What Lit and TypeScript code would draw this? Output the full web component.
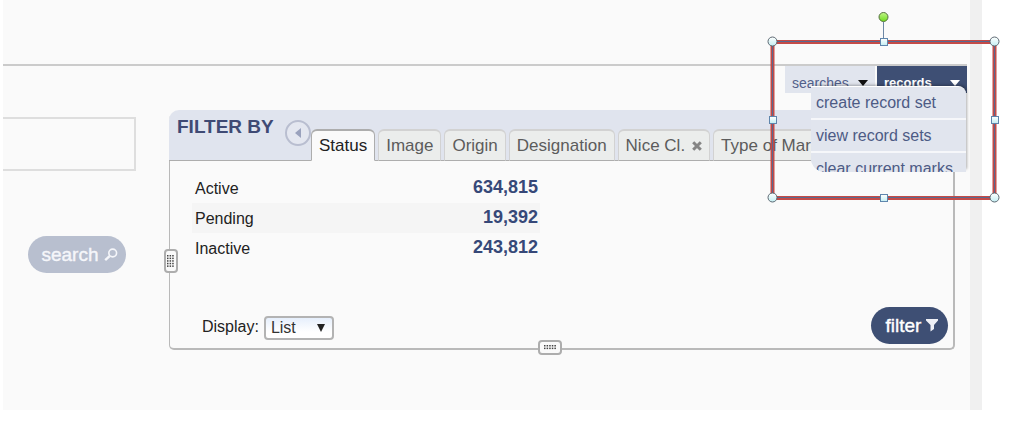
import { LitElement, html, svg, css } from "lit";
import { customElement, property, state } from "lit/decorators.js";
import { classMap } from "lit/directives/class-map.js";

@customElement("record-nav")
class RecordNav extends LitElement {
  static styles = css`
    :host { display: flex; justify-content: flex-end; gap: 2px; position: relative; }
    button { font: inherit; border: 0; margin: 0; cursor: pointer; text-align: left; }
    .item {
      display: flex; align-items: center; justify-content: space-between;
      width: 90px; height: 27px; padding: 6px 7px 0; box-sizing: border-box;
      background: #e1e5ee; color: #52608a; font-size: 14px; line-height: 20px;
    }
    .current { background: #3e4f74; color: #fff; font-size: 13px; font-weight: bold; }
    .menu {
      position: absolute; top: 20px; right: 1px; width: 155px; height: 86px;
      box-sizing: border-box; overflow: hidden; border-top: 1px solid #fff;
      background: #e1e5ee; border-radius: 0 8px 0 14px;
      box-shadow: 2px -2px 3px -1px rgba(0, 0, 0, 0.3);
    }
    .entry {
      display: block; width: 100%; height: 33px; padding: 0 5px; background: #e1e5ee;
      border-bottom: 2px solid #f6f7fa; color: #4d5b85; font-size: 16px; line-height: 31px;
      white-space: nowrap;
    }
  `;
  render() {
    return html`
      <button class="item">searches
        <svg width="10" height="6" viewBox="0 0 10 6"><path d="M0 0H10L5 6Z" fill="#111" /></svg>
      </button>
      <button class="item current" aria-expanded="true">records
        <svg width="10" height="6" viewBox="0 0 10 6"><path d="M0 0H10L5 6Z" fill="#fff" /></svg>
      </button>
      <div class="menu">
        ${["create record set", "view record sets", "clear current marks"].map(
          (t) => html`<button class="entry">${t}</button>`
        )}
      </div>`;
  }
}

@customElement("drag-handle")
class DragHandle extends LitElement {
  @property({ type: Number }) cols = 3;
  @property({ type: Number }) rows = 5;
  static styles = css`
    :host {
      display: flex; align-items: center; justify-content: center; box-sizing: border-box;
      border: 2px solid #adadad; border-radius: 4px; background: #fafafa;
    }
    svg { display: block; }
  `;
  render() {
    const dots = [];
    for (let r = 0; r < this.rows; r++)
      for (let c = 0; c < this.cols; c++)
        dots.push(svg`<rect x=${c * 2.6} y=${r * 2.6} width="1.5" height="1.5" fill="#444" />`);
    return html`<svg width=${this.cols * 2.6} height=${this.rows * 2.6}>${dots}</svg>`;
  }
}

@customElement("selection-frame")
class SelectionFrame extends LitElement {
  static styles = css`
    :host { display: block; pointer-events: none; }
    svg { display: block; }
  `;
  render() {
    const corners = [[6, 32], [228, 32], [6, 188], [228, 188]];
    const sides = [[117, 32], [6, 110], [228, 110], [117, 188]];
    return html`<svg width="235" height="195" viewBox="0 0 235 195">
      <defs>
        <linearGradient id="knob" x1="0" y1="0" x2="0" y2="1">
          <stop offset="0" stop-color="#fff" /><stop offset="1" stop-color="#c3eef2" />
        </linearGradient>
        <linearGradient id="spin" x1="0" y1="0" x2="0" y2="1">
          <stop offset="0" stop-color="#c2f58a" /><stop offset="1" stop-color="#6fdd1c" />
        </linearGradient>
      </defs>
      <path d="M117.5 12V32" stroke="#6d87a5" />
      <rect x="6.5" y="32" width="222" height="156" fill="none" stroke="#c34a47" stroke-width="4" />
      <rect x="6.5" y="31.5" width="222" height="156" fill="none" stroke="#58698f" stroke-width="1" />
      ${sides.map(([x, y]) => svg`<rect x=${x - 2.5} y=${y - 3.5} width="7" height="7" fill="url(#knob)" stroke="#5f86ad" />`)}
      ${corners.map(([x, y]) => svg`<circle cx=${x + 0.5} cy=${y - 0.5} r="4.5" fill="url(#knob)" stroke="#5c6872" />`)}
      <circle cx="117.5" cy="7" r="4.5" fill="url(#spin)" stroke="#55703f" />
    </svg>`;
  }
}

@customElement("app-root")
class AppRoot extends LitElement {
  @state() private tab = "Status";

  static styles = css`
    :host { display: block; font-family: "Liberation Sans", Arial, sans-serif; background: #fff; overflow: hidden; }
    * { box-sizing: border-box; }
    button, select, input { font: inherit; margin: 0; }
    .page {
      position: relative; margin: 0 43px 16px 3px; padding: 64px 0 60px;
      background: #fafafa; border-right: 12px solid #f0f0f0;
    }
    .top { margin-right: 3px; border-top: 2px solid #cbcbcb; position: relative; z-index: 1; }
    .frame { position: absolute; top: 10px; right: -31px; z-index: 2; }
    .columns { display: grid; grid-template-columns: 133px 1fr; gap: 33px; margin: 17px 15px 0 0; }
    .side { display: flex; flex-direction: column; align-items: flex-end; padding-top: 7px; }
    .query {
      width: 100%; height: 54px; padding: 0 8px; border: 2px solid #dedede; border-left: 0;
      background: #fafafa; border-radius: 0; outline: none;
    }
    .pill {
      display: flex; align-items: center; justify-content: center; gap: 5px; height: 37px;
      border: 0; border-radius: 19px; padding: 0 0 0 5px; color: #fff; font-size: 19px; line-height: 24px;
      -webkit-text-stroke: 0.4px currentColor; cursor: pointer;
    }
    .search { width: 98px; margin: 65px 10px 0 0; background: #b8bfcf; color: #f5f6fa; }
    .filter { width: 77px; background: #3e4f74; }
    .panel { position: relative; min-width: 0; }
    .head {
      display: flex; height: 51px; padding-left: 8px; background: #e0e4ee;
      border-radius: 10px 10px 0 0; overflow: hidden; box-shadow: inset 0 -1px #adadad;
    }
    .title { flex: none; margin: 0; width: 108px; padding-top: 5px; color: #3f4a74; font-size: 19px; line-height: 24px; font-weight: bold; white-space: nowrap; }
    .back {
      flex: none; display: flex; align-items: center; justify-content: center;
      width: 26px; height: 26px; margin-top: 10px; padding: 0 1px 0 0; border: 2px solid #b9bed0;
      border-radius: 50%; background: #e4e7f0;
    }
    .tabs { display: flex; gap: 3px; padding-top: 19px; min-width: 0; }
    .tab {
      flex: none; display: flex; align-items: center; gap: 7px; padding: 0 7px; cursor: pointer;
      border: 1px solid #d2d2d2; border-top-width: 2px; border-bottom-color: #adadad;
      border-radius: 6px 6px 0 0; background: #ebedec; color: #5c5c5c;
      font-size: 17px; line-height: 24px; white-space: nowrap;
    }
    .on { background: #fafafa; color: #222; border-color: #adadad; border-bottom-color: #fafafa; }
    .body {
      padding: 12px 5px 4px 22px; border: solid #b9b9b9; border-width: 0 2px 2px 1px;
      border-radius: 0 0 5px 5px;
    }
    .counts { width: 348px; border-collapse: collapse; color: #222; font-size: 16px; line-height: 20px; }
    .counts th, .counts td { height: 30px; padding: 2px 3px 0; text-align: left; font-weight: normal; }
    .counts td { padding: 0 2px 2px 0; text-align: right; font-size: 18px; font-weight: bold; color: #364878; }
    .counts tr:nth-child(even) { background: #f5f5f5; }
    .foot { display: flex; justify-content: space-between; align-items: flex-end; margin-top: 44px; padding-left: 10px; }
    .display { display: flex; align-items: center; gap: 5px; padding-bottom: 4px; color: #222; font-size: 16px; line-height: 20px; }
    .display label { padding-bottom: 3px; }
    .pick { position: relative; display: flex; align-items: center; }
    .pick select {
      appearance: none; width: 70px; height: 24px; padding: 0 5px; color: #333;
      border: 2px solid #b3b3b3; border-radius: 4px; outline: none;
      background: linear-gradient(#e6effc, #fff 70%);
    }
    .pick svg { position: absolute; right: 9px; pointer-events: none; }
    .hx, .hy { position: absolute; }
    .hx { top: 58%; left: -5px; width: 14px; height: 24px; }
    .hy { bottom: -5px; left: 47%; width: 24px; height: 15px; }
  `;

  render() {
    const tabs = ["Status", "Image", "Origin", "Designation", "Nice Cl.", "Type of Mark"];
    const counts = [["Active", "634,815"], ["Pending", "19,392"], ["Inactive", "243,812"]];
    return html`
      <main class="page">
        <header class="top"><record-nav></record-nav></header>
        <div class="columns">
          <form class="side" @submit=${(e: Event) => e.preventDefault()}>
            <input class="query" type="text" aria-label="Search term" />
            <button class="pill search">search
              <svg width="14" height="14" viewBox="0 0 14 14" fill="none" stroke="#f5f6fa">
                <circle cx="8.7" cy="5" r="3.9" stroke-width="1.6" />
                <path d="M5.6 8.2L1.2 12.2" stroke-width="2.4" />
              </svg>
            </button>
          </form>
          <section class="panel">
            <div class="head">
              <h2 class="title">FILTER BY</h2>
              <button class="back" aria-label="Previous tabs">
                <svg width="6" height="10" viewBox="0 0 6 10"><path d="M6 0V10L0 5Z" fill="#9aa2bd" /></svg>
              </button>
              <div class="tabs" role="tablist">
                ${tabs.map((t) => html`<button role="tab" aria-selected=${t === this.tab}
                  class=${classMap({ tab: true, on: t === this.tab })}
                  @click=${() => (this.tab = t)}>${t}${t === "Nice Cl."
                    ? html`<svg width="10" height="10" viewBox="0 0 10 10"><path d="M1.2 1.2L8.8 8.8M8.8 1.2L1.2 8.8" stroke="#858585" stroke-width="3" /></svg>`
                    : ""}</button>`)}
              </div>
            </div>
            <div class="body">
              <table class="counts">
                <tbody>${counts.map(([n, v]) => html`<tr><th scope="row">${n}</th><td>${v}</td></tr>`)}</tbody>
              </table>
              <div class="foot">
                <div class="display">
                  <label for="display">Display:</label>
                  <span class="pick">
                    <select id="display"><option>List</option></select>
                    <svg width="8" height="8" viewBox="0 0 8 8"><path d="M0 0H8L4 8Z" fill="#222" /></svg>
                  </span>
                </div>
                <button class="pill filter">filter
                  <svg width="12" height="13" viewBox="0 0 12 13"><path d="M0 0H12V1.5L8 6V10L4.5 12.5V6L0 1.5Z" fill="#eef0f6" /></svg>
                </button>
              </div>
            </div>
            <drag-handle class="hx" cols="3" rows="5"></drag-handle>
            <drag-handle class="hy" cols="5" rows="2"></drag-handle>
          </section>
        </div>
        <selection-frame class="frame"></selection-frame>
      </main>`;
  }
}
